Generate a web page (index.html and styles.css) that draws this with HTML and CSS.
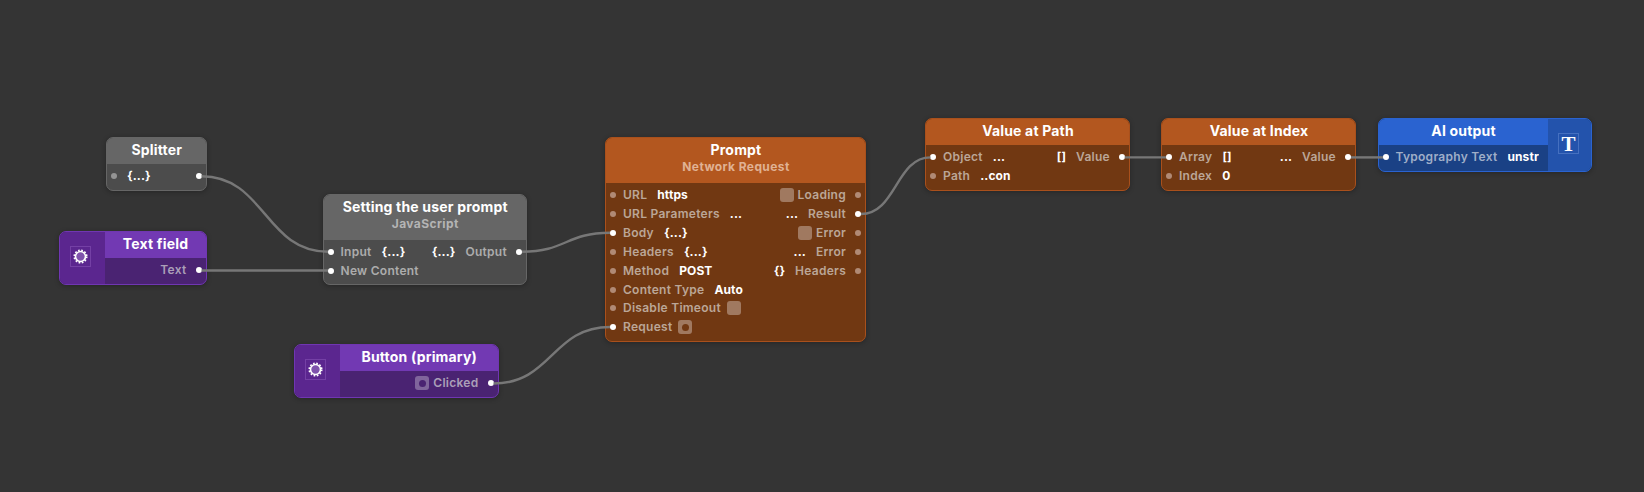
FILE: index.html
```
<!DOCTYPE html>
<html lang="en">
<head>
<meta charset="utf-8">
<title>Node graph</title>
<link rel="stylesheet" href="styles.css">
</head>
<body>
<main class="canvas">
  <section class="node gray splitter">
    <div class="main">
      <header><h2>Splitter</h2></header>
      <div class="body">
        <div class="row"><i class="port"></i><b>{...}</b><i class="port on end"></i></div>
      </div>
    </div>
  </section>

  <section class="node purple textfield">
    <div class="side"><svg class="gear" viewBox="0 0 21 21"><rect x=".5" y=".5" width="20" height="20"/><circle class="teeth" cx="10.500" cy="10.500" r="6.200"/><circle class="ring" cx="10.500" cy="10.500" r="5"/></svg></div>
    <div class="main">
      <header><h2>Text field</h2></header>
      <div class="body">
        <div class="row"><span class="end">Text</span><i class="port on"></i></div>
      </div>
    </div>
  </section>

  <section class="node gray script">
    <div class="main">
      <header><h2>Setting the user prompt</h2><p>JavaScript</p></header>
      <div class="body">
        <div class="row"><i class="port on"></i><span>Input</span><b>{...}</b><b class="end">{...}</b><span>Output</span><i class="port on"></i></div>
        <div class="row"><i class="port on"></i><span>New Content</span></div>
      </div>
    </div>
  </section>

  <section class="node purple button">
    <div class="side"><svg class="gear" viewBox="0 0 21 21"><rect x=".5" y=".5" width="20" height="20"/><circle class="teeth" cx="10.500" cy="10.500" r="6.200"/><circle class="ring" cx="10.500" cy="10.500" r="5"/></svg></div>
    <div class="main">
      <header><h2>Button (primary)</h2></header>
      <div class="body">
        <div class="row"><i class="box pulse end"></i><span class="after">Clicked</span><i class="port on"></i></div>
      </div>
    </div>
  </section>

  <section class="node orange prompt">
    <div class="main">
      <header><h2>Prompt</h2><p>Network Request</p></header>
      <div class="body">
        <div class="row"><i class="port"></i><span>URL</span><b>https</b><i class="box end"></i><span class="after">Loading</span><i class="port"></i></div>
        <div class="row"><i class="port"></i><span>URL Parameters</span><b>...</b><b class="end">...</b><span>Result</span><i class="port on"></i></div>
        <div class="row"><i class="port on"></i><span>Body</span><b>{...}</b><i class="box end"></i><span class="after">Error</span><i class="port"></i></div>
        <div class="row"><i class="port"></i><span>Headers</span><b>{...}</b><b class="end">...</b><span>Error</span><i class="port"></i></div>
        <div class="row"><i class="port"></i><span>Method</span><b>POST</b><b class="end">{}</b><span>Headers</span><i class="port"></i></div>
        <div class="row"><i class="port"></i><span>Content Type</span><b>Auto</b></div>
        <div class="row"><i class="port"></i><span>Disable Timeout</span><i class="box"></i></div>
        <div class="row"><i class="port on"></i><span>Request</span><i class="box pulse"></i></div>
      </div>
    </div>
  </section>

  <section class="node orange path">
    <div class="main">
      <header><h2>Value at Path</h2></header>
      <div class="body">
        <div class="row"><i class="port on"></i><span>Object</span><b>...</b><b class="end">[]</b><span>Value</span><i class="port on"></i></div>
        <div class="row"><i class="port"></i><span>Path</span><b>..con</b></div>
      </div>
    </div>
  </section>

  <section class="node orange index">
    <div class="main">
      <header><h2>Value at Index</h2></header>
      <div class="body">
        <div class="row"><i class="port on"></i><span>Array</span><b>[]</b><b class="end">...</b><span>Value</span><i class="port on"></i></div>
        <div class="row"><i class="port"></i><span>Index</span><b>0</b></div>
      </div>
    </div>
  </section>

  <section class="node blue output">
    <div class="main">
      <header><h2>AI output</h2></header>
      <div class="body">
        <div class="row"><i class="port on"></i><span>Typography Text</span><b class="clip">unstr</b></div>
      </div>
    </div>
    <div class="side"><div class="glyph">T</div></div>
  </section>

  <svg class="wires" width="1644" height="492" viewBox="0 0 1644 492">
    <path d="M201.500 176.300C265 176.300 265 251.700 328 251.700"/>
    <path d="M201.500 270.500H328"/>
    <path d="M522 251.700C566 251.700 566 232.800 610 232.800"/>
    <path d="M493.500 383.500C552 383.500 552 327 610 327"/>
    <path d="M861 214C896 214 896 157.400 930.500 157.400"/>
    <path d="M1124.700 157.400H1166"/>
    <path d="M1351 157.400H1383"/>
  </svg>
</main>
</body>
</html>
```
FILE: styles.css
```
* { box-sizing: border-box; }
body { margin: 0; background: #343434; font-family: Inter, "Liberation Sans", sans-serif; }
.canvas { position: relative; width: 1644px; height: 492px; overflow: hidden; }
.wires { position: absolute; left: 0; top: 0; fill: none; stroke: #777; stroke-width: 2.4; }

.node {
  position: absolute; display: flex; overflow: hidden;
  border: 1.4px solid var(--edge); border-radius: 7px; background: var(--fill);
  box-shadow: 0 1px 5px rgba(0, 0, 0, .28);
}
.gray { --head: #666; --fill: #4c4c4c; --edge: #666; --sub: #b4b4b4; --label: #acacac; --dot: #949494; }
.purple { --head: #7239b3; --fill: #4a2372; --edge: #7036b2; --label: #ab9fb8; --icon: #5b268f; --dot: #83689d; }
.orange { --head: #b3571f; --fill: #713812; --edge: #a9501c; --sub: #e0b294; --label: #bba697; --dot: #b08a75; }
.blue { --head: #2a63d0; --fill: #1a4185; --edge: #2a63d0; --label: #9faec8; --icon: #2353ac; --dot: #7b90b8; }

.splitter { left: 106px; top: 137px; width: 100.500px; height: 54px; }
.textfield { left: 58.500px; top: 231px; width: 148px; height: 54px; }
.script { left: 322.500px; top: 193.500px; width: 204.500px; height: 91.500px; }
.button { left: 294px; top: 344px; width: 204.500px; height: 54px; }
.prompt { left: 605px; top: 137px; width: 261px; height: 205px; }
.path { left: 925px; top: 118px; width: 205px; height: 73px; }
.index { left: 1161px; top: 118px; width: 195px; height: 73px; }
.output { left: 1377.500px; top: 118px; width: 214px; height: 54px; }

.main { flex: 1; min-width: 0; display: flex; flex-direction: column; }
.side { width: 45px; flex: none; background: var(--icon); display: flex; justify-content: center; align-items: center; padding: 0 4px 3px 0; }
.output .side { width: 43px; padding-right: 1px; }
header { height: 26px; flex: none; background: var(--head); color: #fff; text-align: center; padding: 2px 0 0 1px; }
.script header, .prompt header { height: 45px; }
h2 { margin: 0; font-size: 14px; line-height: 20px; font-weight: 700; letter-spacing: .18px; white-space: nowrap; }
p { margin: 0; font-size: 12px; line-height: 14px; font-weight: 700; letter-spacing: .4px; color: var(--sub); }
.body { padding: 3px 4px 0; }
.row { height: 18.850px; display: flex; align-items: center; font-size: 12px; letter-spacing: .27px; line-height: 18px; white-space: nowrap; }
.row span { color: var(--label); font-weight: 600; }
.row b { color: #fff; font-weight: 700; letter-spacing: .1px; }
.port { width: 6px; height: 6px; border-radius: 50%; background: var(--dot); flex: none; }
.on { background: #fff; }
.port + span { margin-left: 7px; }
.port + b { margin-left: 10px; }
span + b, b + span { margin-left: 10px; }
span + .port { margin-left: 9px; }
.row .end { margin-left: auto; }
.box { width: 14px; height: 14px; border-radius: 3px; background: #a07960; flex: none; }
.purple .box { background: #80659c; }
.box + span { margin-left: 4px; }
span + .box { margin-left: 6px; }
.pulse { display: flex; align-items: center; justify-content: center; }
.pulse::before { content: ""; width: 7px; height: 7px; border-radius: 50%; background: var(--fill); }
.clip { overflow: hidden; width: 32px; }
.gear { width: 21px; height: 21px; fill: none; }
.gear rect { stroke: #7440a5; }
.gear circle { stroke: #fff; }
.gear .ring { stroke-width: 1.6; fill: #7f53ac; }
.gear .teeth { stroke-width: 1.700; stroke-dasharray: 1.700 1.546; }
.glyph { width: 21px; height: 21px; border: 1px solid #4570c0; color: #fff; font: 700 21px/20px "Liberation Serif", serif; display: flex; justify-content: center; }
```
